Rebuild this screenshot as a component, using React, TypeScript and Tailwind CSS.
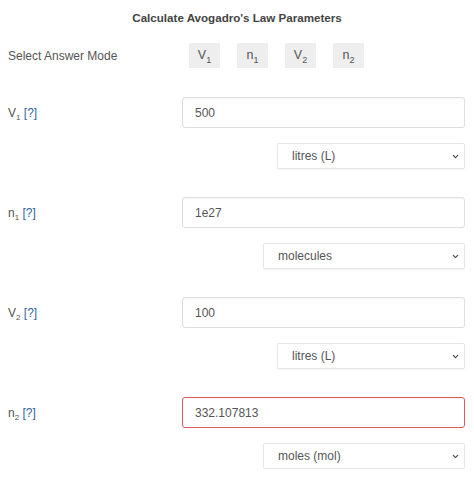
import React, { useState } from 'react'
import { ChevronDown } from 'lucide-react'

type Param = {
  sym: string
  sub: string
  value: string
  unit: string
  units: string[]
  selectWidth: string
  error?: boolean
}

const PARAMS: Param[] = [
  { sym: 'V', sub: '1', value: '500', unit: 'litres (L)', units: ['litres (L)', 'millilitres (mL)', 'cubic metres'], selectWidth: 'w-[188px]' },
  { sym: 'n', sub: '1', value: '1e27', unit: 'molecules', units: ['moles (mol)', 'molecules'], selectWidth: 'w-[202px]' },
  { sym: 'V', sub: '2', value: '100', unit: 'litres (L)', units: ['litres (L)', 'millilitres (mL)', 'cubic metres'], selectWidth: 'w-[188px]' },
  { sym: 'n', sub: '2', value: '332.107813', unit: 'moles (mol)', units: ['moles (mol)', 'molecules'], selectWidth: 'w-[202px]', error: true }
]

const styles = {
  input: 'flex-1 min-w-0 h-[31px] border rounded-[3px] px-[12px] text-[12px] text-[#555] bg-white shadow-[inset_0_1px_1px_rgba(0,0,0,0.04)] focus:outline-none',
  select: 'block appearance-none h-[26px] border border-[#e6e6e6] rounded-[2px] pl-[14px] pr-6 text-[12px] text-[#555] bg-white shadow-[0_1px_1px_rgba(0,0,0,0.05)] focus:outline-none'
}

const Sym = ({ sym, sub, big }: { sym: string; sub: string; big?: boolean }) => (
  <span>
    {sym}
    <sub className={big ? 'text-[9px] align-[-2px]' : 'text-[8px] align-[-1px]'}>{sub}</sub>
  </span>
)

const ParamBlock = ({ p, first }: { p: Param; first: boolean }) => {
  const [value, setValue] = useState(p.value)
  const [unit, setUnit] = useState(p.unit)

  return (
    <div className={first ? 'mt-[29px]' : 'mt-[28px]'}>
      <div className="flex items-center">
        <label className="w-[182px] shrink-0 pl-[8px] text-[12px] text-[#555]">
          <Sym sym={p.sym} sub={p.sub} /> <span className="text-[#2f5fa8]">[?]</span>
        </label>
        <input
          value={value}
          onChange={(e) => setValue(e.target.value)}
          className={`${styles.input} ${p.error ? 'border-[#dc5a60]' : 'border-[#dedede]'}`}
        />
      </div>
      <div className="flex justify-end mt-[15px]">
        <div className="relative">
          <select value={unit} onChange={(e) => setUnit(e.target.value)} className={`${styles.select} ${p.selectWidth}`}>
            {p.units.map((u) => (
              <option key={u}>{u}</option>
            ))}
          </select>
          <ChevronDown className="absolute right-[5px] top-[9px] w-[9px] h-[9px] text-[#444] pointer-events-none" strokeWidth={3} />
        </div>
      </div>
    </div>
  )
}

export default function App() {
  const [mode, setMode] = useState('n2')
  const modes = [
    { id: 'V1', sym: 'V', sub: '1' },
    { id: 'n1', sym: 'n', sub: '1' },
    { id: 'V2', sym: 'V', sub: '2' },
    { id: 'n2', sym: 'n', sub: '2' }
  ]

  return (
    <div className="w-[474px] pr-[9px] bg-white" style={{ fontFamily: '"Liberation Sans", Arial, sans-serif' }}>
      <div className="h-[36px] flex items-center justify-center pl-[9px] text-[11.6px] font-bold text-[#444]">
        Calculate Avogadro&apos;s Law Parameters
      </div>
      <div className="flex items-center mt-[7px]">
        <div className="w-[189px] shrink-0 pl-[8px] text-[12px] text-[#555]">Select Answer Mode</div>
        <div className="flex gap-x-[17px]">
          {modes.map((m) => (
            <button
              key={m.id}
              onClick={() => setMode(m.id)}
              className={`w-[31px] h-[25px] bg-[#eeeeee] text-[12.5px] text-[#555] ${mode === m.id ? 'bg-[#ececec]' : ''}`}
            >
              <Sym sym={m.sym} sub={m.sub} big />
            </button>
          ))}
        </div>
      </div>
      {PARAMS.map((p, i) => (
        <ParamBlock key={p.sym + p.sub} p={p} first={i === 0} />
      ))}
    </div>
  )
}
